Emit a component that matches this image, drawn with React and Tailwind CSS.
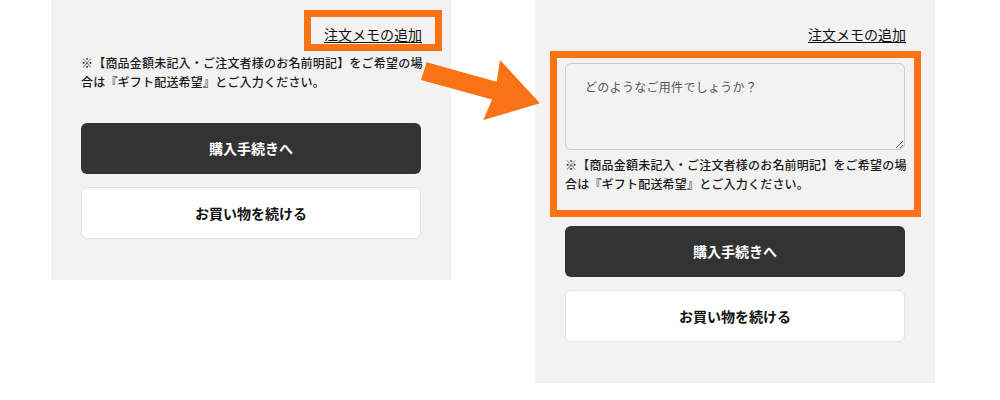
import React from 'react';

const jp = { fontFamily: '"Noto Sans CJK JP", "Noto Sans", sans-serif' };

const Note = ({ className = '' }) => (
  <p className={`text-[12px] leading-[19px] font-medium tracking-[0.2px] whitespace-nowrap text-[#1a1a1a] ${className}`}>
    ※【商品金額未記入・ご注文者様のお名前明記】をご希望の場
    <br />
    合は『ギフト配送希望』とご入力ください。
  </p>
);

const Buttons = ({ className = '' }) => (
  <div className={className}>
    <button className="w-full h-[51px] rounded-[6px] bg-[#333333] text-white text-[14px] font-bold">
      購入手続きへ
    </button>
    <button className="w-full h-[52px] mt-[13px] rounded-[6px] bg-white border border-[#e3e3e3] text-[#111] text-[14px] font-bold">
      お買い物を続ける
    </button>
  </div>
);

const MemoLink = () => (
  <div className="flex justify-end pt-[24px]">
    <a href="#" className="text-[14px] leading-[20px] text-[#111] underline underline-offset-[2px] mr-[-1px]">
      注文メモの追加
    </a>
  </div>
);

const App = () => {
  return (
    <div className="relative w-[1000px] h-[400px] bg-white overflow-hidden" style={jp}>
      <div className="flex items-start">
        {/* Before */}
        <div className="ml-[51px] w-[400px] h-[280px] bg-[#f2f2f2] px-[30px]">
          <MemoLink />
          <Note className="mt-[9px]" />
          <Buttons className="mt-[32px]" />
        </div>

        {/* After */}
        <div className="ml-[84px] w-[400px] h-[383px] bg-[#f2f2f2] px-[30px]">
          <MemoLink />
          <textarea
            placeholder="どのようなご用件でしょうか？"
            className="block w-full h-[87px] mt-[19px] rounded-[6px] border border-[#cccccc] bg-[#f2f2f2] pl-[19px] pt-[13px] text-[12px] leading-[20px] tracking-[0.3px] placeholder:text-[#555]"
          />
          <Note className="mt-[5px]" />
          <Buttons className="mt-[33px]" />
        </div>
      </div>

      {/* annotations */}
      <div className="absolute left-[304px] top-[10px] w-[138px] h-[41px] border-[7px] border-[#f97316]" />
      <div className="absolute left-[550px] top-[51px] w-[371px] h-[166px] border-[7px] border-[#f97316]" />
      <svg className="absolute left-[415px] top-[55px]" width="130" height="70" viewBox="0 0 130 70">
        <polygon
          points="11.7,7.3 81.7,26.7 85,5 125,48.3 68.3,65 77,44.5 6,25"
          fill="#f97316"
        />
      </svg>
    </div>
  );
};

export default App;
